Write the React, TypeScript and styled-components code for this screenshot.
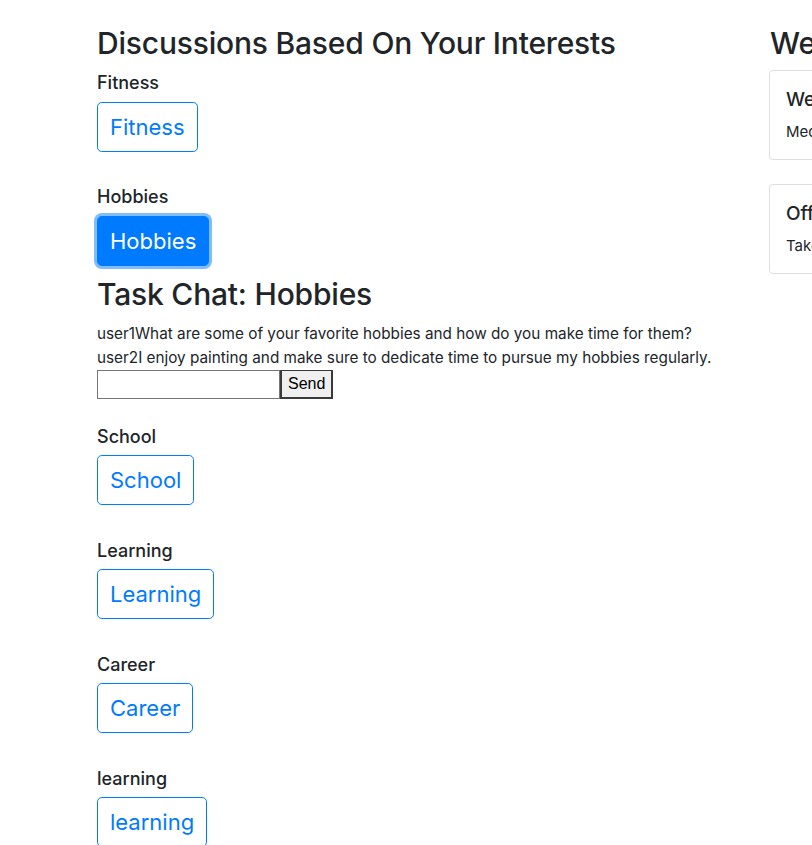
import React from 'react';
import styled, { createGlobalStyle } from 'styled-components';

const GlobalStyle = createGlobalStyle`
  html, body {
    margin: 0;
    padding: 0;
    overflow-x: hidden;
    background: #fff;
  }
  body {
    font-family: Inter, "Helvetica Neue", Arial, sans-serif;
    font-size: 16px;
    line-height: 1.5;
    color: #212529;
  }
`;

const Page = styled.div`
  display: flex;
  align-items: flex-start;
  padding: 25px 0 0 97px;
  width: 1100px;
`;

const Main = styled.div`
  width: 673px;
  flex-shrink: 0;
`;

const Side = styled.div`
  width: 300px;
  flex-shrink: 0;
`;

const Heading = styled.h2<{ tight?: boolean }>`
  margin: 0 0 ${(p) => (p.tight ? '9px' : '11px')};
  font-size: 30px;
  font-weight: 500;
  line-height: 1.2;
  letter-spacing: -0.2px;
`;

const Section = styled.div<{ open?: boolean }>`
  margin-bottom: ${(p) => (p.open ? '27px' : '34.4px')};
`;

const Label = styled.h5`
  margin: 0 0 8px;
  font-size: 18px;
  font-weight: 500;
  line-height: 1.2;
`;

const TopicButton = styled.button<{ active?: boolean }>`
  display: inline-block;
  font-family: inherit;
  font-size: 22px;
  line-height: 32px;
  font-weight: 400;
  padding: 8px 12px;
  border-radius: 4.8px;
  border: 1px solid #007bff;
  color: ${(p) => (p.active ? '#fff' : '#007bff')};
  background: ${(p) => (p.active ? '#007bff' : '#fff')};
  box-shadow: ${(p) => (p.active ? '0 0 0 3px rgba(0, 123, 255, 0.5)' : 'none')};
  cursor: pointer;
  outline: none;
`;

const ChatTitle = styled.h2`
  margin: 10px 0 10px;
  font-size: 30px;
  font-weight: 500;
  line-height: 1.2;
  letter-spacing: -0.2px;
`;

const Message = styled.div`
  font-size: 15.3px;
  line-height: 24px;
`;

const ChatForm = styled.form`
  display: flex;
  align-items: stretch;
  margin: 0;
`;

const ChatInput = styled.input`
  width: 183px;
  height: 29px;
  box-sizing: border-box;
  border: 1px solid #767676;
  border-radius: 0;
  font-family: inherit;
  font-size: 16px;
  padding: 1px 2px;
`;

const SendButton = styled.button`
  height: 29px;
  box-sizing: border-box;
  padding: 0 6px;
  background: #efefef;
  border: 2px solid #3a3a3a;
  border-top-width: 1px;
  border-radius: 0;
  font-family: "Liberation Sans", Arial, sans-serif;
  font-size: 16px;
  color: #000;
`;

const Card = styled.div`
  border: 1px solid rgba(0, 0, 0, 0.125);
  border-radius: 4px;
  padding: 18px 16px 15px;
  margin: 0 0 24px -1px;
  width: 260px;
  white-space: nowrap;
`;

const CardTitle = styled.h5`
  margin: 0 0 8px;
  font-size: 19px;
  font-weight: 500;
  line-height: 1.2;
`;

const CardText = styled.p`
  margin: 0;
  font-size: 15px;
  line-height: 24px;
`;

const topics = ['Fitness', 'Hobbies', 'School', 'Learning', 'Career', 'learning'];

const messages = [
  { user: 'user1', text: 'What are some of your favorite hobbies and how do you make time for them?' },
  { user: 'user2', text: 'I enjoy painting and make sure to dedicate time to pursue my hobbies regularly.' },
];

const events = [
  { title: 'Wellness Workshop', text: 'Meditation and mindfulness session' },
  { title: 'Office Hours', text: 'Take a break and chat with mentors' },
];

export default function App() {
  const active = 'Hobbies';
  return (
    <>
      <GlobalStyle />
      <Page>
        <Main>
          <Heading>Discussions Based On Your Interests</Heading>
          {topics.map((topic) => (
            <Section key={topic} open={topic === active}>
              <Label>{topic}</Label>
              <TopicButton active={topic === active}>{topic}</TopicButton>
              {topic === active && (
                <div>
                  <ChatTitle>Task Chat: {topic}</ChatTitle>
                  {messages.map((m, i) => (
                    <Message key={i}>
                      <span>{m.user}</span>
                      <span>{m.text}</span>
                    </Message>
                  ))}
                  <ChatForm onSubmit={(e) => e.preventDefault()}>
                    <ChatInput type="text" />
                    <SendButton type="submit">Send</SendButton>
                  </ChatForm>
                </div>
              )}
            </Section>
          ))}
        </Main>
        <Side>
          <Heading tight>Weekly Events</Heading>
          {events.map((ev) => (
            <Card key={ev.title}>
              <CardTitle>{ev.title}</CardTitle>
              <CardText>{ev.text}</CardText>
            </Card>
          ))}
        </Side>
      </Page>
    </>
  );
}
